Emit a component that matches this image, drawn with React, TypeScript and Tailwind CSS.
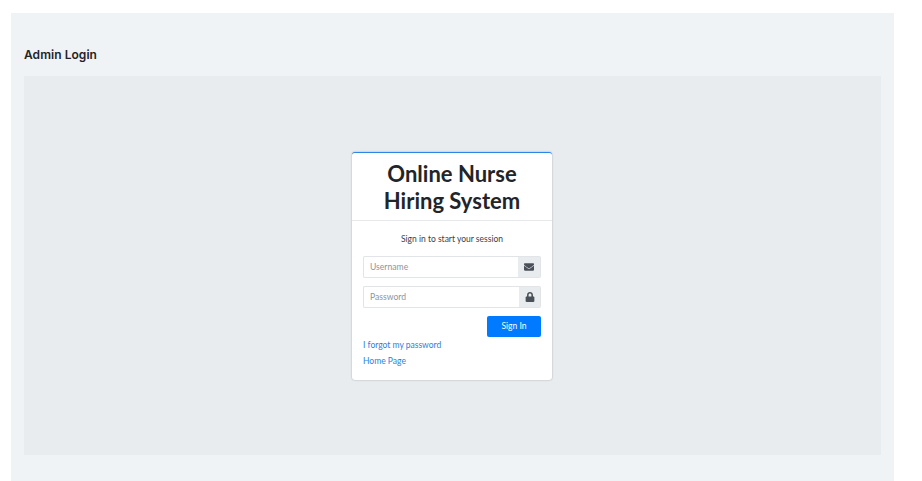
import { FaEnvelope, FaLock } from "react-icons/fa";

const body = { fontFamily: 'Lato, sans-serif' };

function Field({ placeholder, icon, addonWidth }: { placeholder: string; icon: React.ReactNode; addonWidth: string }) {
  return (
    <div className="flex h-[22px] w-[178px]">
      <div className="flex flex-1 items-center rounded-l-[2px] border border-r-0 border-[#e1e5e8] bg-white pl-[6px] pt-[1px] text-[8.6px] text-[#8d959c]">
        {placeholder}
      </div>
      <div className={`flex ${addonWidth} items-center justify-center rounded-r-[2px] border border-l-0 border-[#e1e5e8] bg-[#e9ecef] text-[#495057]`}>
        {icon}
      </div>
    </div>
  );
}

export default function App() {
  return (
    <div className="h-[481px] w-[922px] bg-white pl-[11px] pt-[13px]" style={body}>
      <div className="flex h-[468px] w-[883px] flex-col bg-[#eff3f6] px-[13px]">
        <h1
          className="flex h-[63px] items-center pt-[20px] text-[12px] font-semibold tracking-[0.05px] text-[#1f2327]"
          style={{ fontFamily: 'Inter, sans-serif' }}
        >
          Admin Login
        </h1>
        <div className="flex h-[379px] items-center justify-center bg-[#e9ecef] pr-[1px]">
          <div className="h-[228px] w-[200px] overflow-hidden rounded-[3px] border-t-[1.5px] border-[#2a86e8] bg-white shadow-[0_0_2px_rgba(0,0,0,0.3)]">
            <div className="flex h-[68px] flex-col items-center justify-center border-b border-[#e6e9ec] pt-[1px] text-[22px] font-bold leading-[27px] text-[#212529]">
              <span>Online Nurse</span>
              <span>Hiring System</span>
            </div>
            <div className="flex flex-col px-[11px] pt-[11px]">
              <p className="text-center text-[8.5px] leading-[14px] text-[#3b4046]">Sign in to start your session</p>
              <div className="mt-[10px] flex flex-col gap-[8px]">
                <Field placeholder="Username" addonWidth="w-[23px]" icon={<FaEnvelope className="h-[10px] w-[10px]" />} />
                <Field placeholder="Password" addonWidth="w-[22px]" icon={<FaLock className="h-[10px] w-[10px]" />} />
              </div>
              <div className="mt-[8px] flex justify-end">
                <button className="h-[21px] w-[54px] rounded-[2px] bg-[#007bff] text-[8.5px] text-white">Sign In</button>
              </div>
              <a className="mt-[1px] text-[8.5px] leading-[15px] text-[#2b7fe0]">I forgot my password</a>
              <a className="mt-[1px] text-[8.5px] leading-[15px] text-[#2b7fe0]">Home Page</a>
            </div>
          </div>
        </div>
      </div>
    </div>
  );
}
